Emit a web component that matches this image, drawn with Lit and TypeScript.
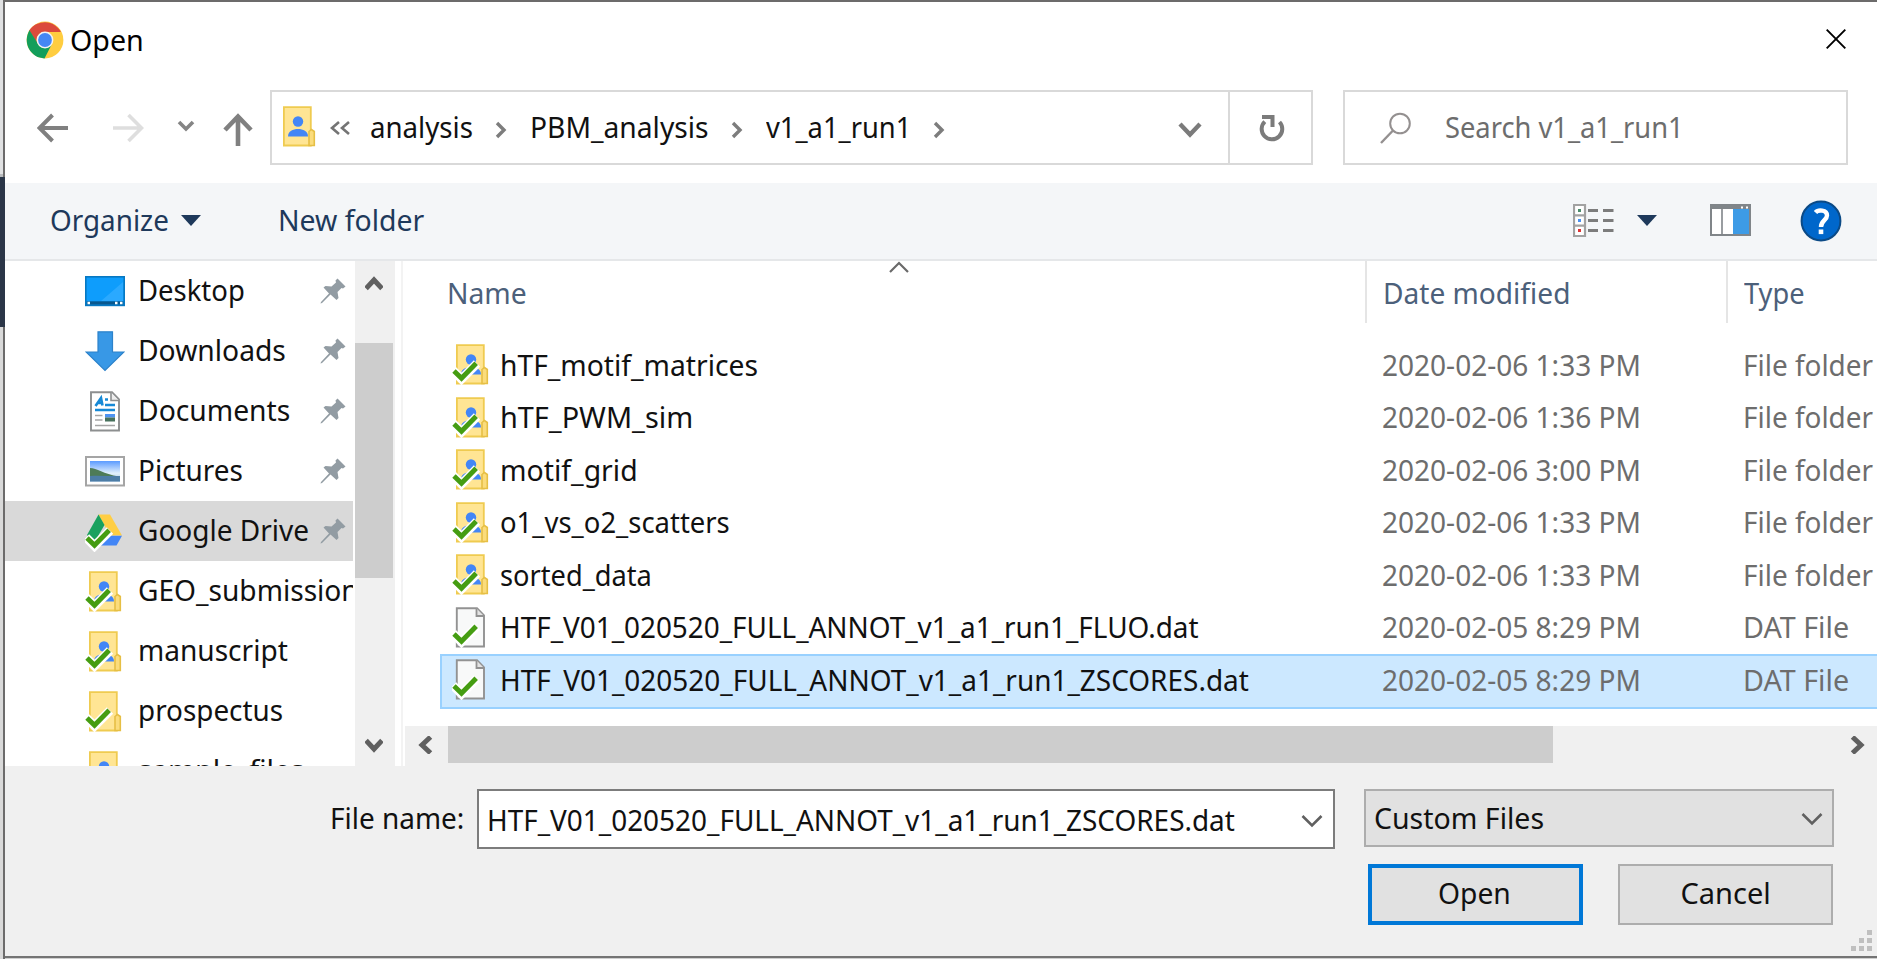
import { LitElement, html, css, svg, nothing } from "lit";
import { customElement, property } from "lit/decorators.js";

/** One line of text set to an exact advance width. */
@customElement("fit-text")
class FitText extends LitElement {
  @property() text = "";
  @property({ type: Number }) w = 0;
  static styles = css`
    :host { display: block; flex: none; white-space: pre; overflow: visible; }
    span { display: inline-block; transform-origin: 0 50%; }
  `;
  render() {
    return html`<span>${this.text}</span>`;
  }
  updated() {
    const s = this.renderRoot.querySelector("span") as HTMLElement;
    const n = s.offsetWidth;
    this.style.width = this.w + "px";
    if (n && this.w) s.style.transform = `scaleX(${this.w / n})`;
  }
}

const t = (text: string, w: number) => html`<fit-text .text=${text} .w=${w}></fit-text>`;

const check = svg`
  <path d="M1 26.500L9.500 35L25 19.500" fill="none" stroke="#fff" stroke-width="9"/>
  <path d="M2 27L9.500 34.200L24.200 19.200" fill="none" stroke="#459d12" stroke-width="4.900"/>`;
const sheet = svg`
  <path d="M4 1H32V24L35 25V40H4Z" fill="#ffe594"/>
  <path d="M4.900 1.200H31.800V39.500H4.900Z" fill="none" stroke="#efcb50" stroke-width="1.800"/>
  <path d="M30 25.500L32.500 23.500L35.300 25.500V39.500H30Z" fill="#fbdc7c" stroke="#e6bf45" stroke-width="1.600"/>`;
const person = svg`
  <circle cx="19" cy="15.500" r="5.200" fill="#4386f6"/>
  <path d="M9 30.500C9 25 14 23 19 23S29 25 29 30.500Z" fill="#4386f6"/>`;

const icons: Record<string, unknown> = {
  shared: svg`${sheet}${person}${check}`,
  plain: svg`${sheet}${check}`,
  address: svg`${sheet}${person}`,
  file: svg`
    <path d="M4.800 1.200H25L32 8.500V39.500H4.800Z" fill="#f8f9f9" stroke="#929292" stroke-width="1.900"/>
    <path d="M24.500 1.500V9H32" fill="#e3e3e3" stroke="#929292" stroke-width="1.800"/>${check}`,
  desktop: svg`
    <rect x=".8" y="5.800" width="38.400" height="28.600" fill="#0e9dfc" stroke="#0778c2" stroke-width="1.600"/>
    <path d="M16 30L38 11V30Z" fill="#2aa9ff"/>
    <rect x="1.600" y="30.300" width="36.800" height="3.300" fill="#08588f"/>
    <path d="M2.500 32H5M30 32H32.500M35 32H37.500" stroke="#fff" stroke-width="2.400"/>`,
  downloads: svg`<path d="M13 .8H27.500V21H39L20 39.500L1 21H13Z" fill="#3898e6" stroke="#2d82ca" stroke-width="1.200"/>`,
  documents: svg`
    <path d="M6 1.200H27L34 8.500V39.500H6Z" fill="#fff" stroke="#8d8f90" stroke-width="1.900"/>
    <path d="M26 1.500V9.500H34" fill="#eee" stroke="#8d8f90" stroke-width="1.600"/>
    <path d="M10.500 15L16 7L17.500 14.500M13 12H18" fill="none" stroke="#1689d6" stroke-width="2.600"/>
    <path d="M20 8.500H23M20 14H30M10 19H30" stroke="#1689d6" stroke-width="2.400"/>
    <path d="M10 24.500H17.500M10 29H17.500M10 34.500H30" stroke="#a5a5a5" stroke-width="1.700"/>
    <rect x="20" y="23" width="10" height="3.500" fill="#4e94f2"/><rect x="20" y="26.500" width="10" height="4" fill="#47715c"/>`,
  pictures: svg`
    <defs><linearGradient id="sky" x1="0" y1="0" x2="0" y2="1"><stop offset="0" stop-color="#5b9bff"/><stop offset=".6" stop-color="#e2f0fc"/><stop offset="1" stop-color="#9fc3e2"/></linearGradient></defs>
    <rect x="1" y="6" width="38" height="28.500" fill="#fff" stroke="#a5a5a5" stroke-width="2"/>
    <rect x="5" y="10" width="30" height="20.500" fill="url(#sky)"/>
    <path d="M5 17C12 17 18 23 34 25.500H5Z" fill="#4e7b57"/>
    <path d="M5 25C14 24 25 25.500 35 25V30.500H5Z" fill="#4d7da6"/>`,
  drive: svg`
    <path d="M13.500 3.500H25L37 24.500H25Z" fill="#ffce44"/>
    <path d="M13.500 3.500L19.500 14L9 32L2 24Z" fill="#1aa15f"/>
    <path d="M18 24.800H37L31.500 34.500H13Z" fill="#4386f6"/>
    ${check}`,
};

const icon = (name: string) =>
  html`<svg class="icon" width="40" height="41" viewBox="0 0 40 41">${icons[name]}</svg>`;

const pin = html`<svg class="pin" width="26" height="26" viewBox="0 0 26 26">
  <path d="M17.500 .5L25.500 8.500L23 10.500L21.500 10L17.500 14L18.500 20L16.500 22L10.500 16.500L2 25L.5 25.500L1 24L9 15.500L3.500 9.500L5.500 8L11.500 8.500L16 4.500L15.500 2.500Z" fill="#929ca3"/></svg>`;

const stroke = (w: number, h: number, d: string, color: string, sw: number) =>
  html`<svg width=${w} height=${h} viewBox="0 0 ${w} ${h}"><path d=${d} fill="none" stroke=${color} stroke-width=${sw}/></svg>`;

const places: [string, string, number, boolean][] = [
  ["desktop", "Desktop", 107, true],
  ["downloads", "Downloads", 148, true],
  ["documents", "Documents", 152, true],
  ["pictures", "Pictures", 105, true],
  ["drive", "Google Drive", 171, true],
  ["shared", "GEO_submission", 221, false],
  ["shared", "manuscript", 150, false],
  ["plain", "prospectus", 145, false],
  ["shared", "sample_files", 166, false],
];

const files: [string, string, number, string][] = [
  ["shared", "hTF_motif_matrices", 258, "2020-02-06 1:33 PM"],
  ["shared", "hTF_PWM_sim", 193, "2020-02-06 1:36 PM"],
  ["shared", "motif_grid", 138, "2020-02-06 3:00 PM"],
  ["shared", "o1_vs_o2_scatters", 230, "2020-02-06 1:33 PM"],
  ["shared", "sorted_data", 152, "2020-02-06 1:33 PM"],
  ["file", "HTF_V01_020520_FULL_ANNOT_v1_a1_run1_FLUO.dat", 699, "2020-02-05 8:29 PM"],
  ["file", "HTF_V01_020520_FULL_ANNOT_v1_a1_run1_ZSCORES.dat", 749, "2020-02-05 8:29 PM"],
];

@customElement("app-root")
class AppRoot extends LitElement {
  static styles = css`
    * { box-sizing: border-box; }
    :host {
      display: grid; grid-template-columns: 5px 1fr; width: 1877px; height: 959px; overflow: hidden;
      font: 29px/40px "Noto Sans", "Open Sans", sans-serif; color: #111;
    }
    svg { display: block; flex: none; }
    .edge { display: grid; grid-template-rows: 177px 150px 1fr; border-right: 2px solid #6c6b6b; background: #d9d9d9; }
    .edge i:nth-child(1) { background: #e0e1e2; border-bottom: 3px solid #b9bbbe; }
    .edge i:nth-child(2) { background: #2b3648; margin-right: -2px; }
    .dialog { display: grid; grid-template-rows: 88px 93px 78px 505px 190px 3px; border-top: 2px solid #6c6b6b; background: #fff; min-width: 0; }
    .title { display: flex; align-items: center; padding: 0 31px 12px 21px; color: #000; }
    .title fit-text { margin: 0 auto 0 6px; }
    .title svg:last-child { margin-bottom: 3px; }
    .nav { display: flex; align-items: flex-start; padding-left: 32px; }
    .nav > svg { margin-top: 23px; }
    .address { display: flex; align-items: center; width: 1043px; height: 75px; border: 2px solid #d9d9d9; margin-left: 17px; padding-left: 7px; flex: none; }
    .address .icon { margin-bottom: 3px; }
    .address fit-text { margin-bottom: 1px; }
    .crumb { display: flex; align-items: center; }
    .crumb svg { margin: 4px 23px 0 22px; }
    .drop { margin: 4px 0 0 auto; }
    .refresh { width: 83px; height: 71px; border-left: 2px solid #d9d9d9; margin-left: 26px; display: flex; align-items: center; justify-content: center; padding: 3px 0 0 3px; }
    .search { display: flex; align-items: center; width: 505px; height: 75px; border: 2px solid #d9d9d9; margin-left: 30px; padding-left: 34px; color: #6d6d6d; flex: none; }
    .search fit-text { margin: 0 0 1px 32px; }
    .tools { display: flex; align-items: center; background: #f4f6f8; border-bottom: 2px solid #e5e7e9; padding: 0 35px 2px 45px; color: #1e395b; }
    .tools .tri { margin: 2px 77px 0 12px; }
    .tools .tri2 { margin: 2px 53px 0 23px; }
    .tools .views { margin-left: auto; }
    .tools .help { margin: 1px 0 0 49px; }
    .body { display: grid; grid-template-columns: 348px 2px 40px 6px 1fr; min-width: 0; overflow: hidden; }
    .places { overflow: hidden; }
    .place { display: flex; align-items: center; height: 60px; padding: 0 0 0 80px; position: relative; }
    .place .icon { margin-right: 13px; }
    .place fit-text { margin-bottom: 2px; }
    .pin { position: absolute; left: 315px; top: 17px; }
    .on { background: #d9d9d9; }
    .vbar { grid-column: 3; background: #f0f0f0; display: flex; flex-direction: column; align-items: flex-start; }
    .vbar svg { margin: 14px 0 0 10px; }
    .vbar b { display: block; width: 38px; height: 235px; background: #cdcdcd; margin-top: 52px; }
    .vbar svg:last-child { margin: 160px 0 0 10px; }
    .list { grid-column: 5; display: grid; grid-template-rows: 79px 386px 40px; border-left: 2px solid #f3f3f3; min-width: 0; }
    .head { display: grid; grid-template-columns: 964px 361px 1fr; height: 62px; color: #4c607a; position: relative; }
    .head > div { display: flex; align-items: center; border-right: 2px solid #e5e5e5; padding: 1px 0 0 16px; }
    .head > div:first-child { padding-left: 44px; }
    .head > .end { border: 0; }
    .sort { position: absolute; left: 486px; top: 0; }
    .row { display: grid; grid-template-columns: 942px 361px 1fr; height: 52.5px; margin-left: 37px; align-items: center; color: #6d6d6d; }
    .row .icon { margin: 0 8px 3px 0; }
    .name { display: flex; align-items: center; padding-left: 12px; color: #111; }
    .row fit-text { margin-bottom: 3px; }
    .sel { background: #cce8ff; box-shadow: inset 0 0 0 2px #99d1ff; height: 55px; margin-top: -1.5px; margin-right: -4px; }
    .hbar { display: flex; background: #f0f0f0; margin-left: 2px; padding-left: 12px; align-items: flex-start; }
    .hbar svg { margin-top: 10px; }
    .hbar b { width: 1105px; height: 37px; background: #cdcdcd; margin: 0 297px 0 15px; flex: none; }
    .foot { background: #f0f0f0; display: grid; grid-template-rows: 60px 60px; row-gap: 15px; padding-top: 23px; position: relative; }
    .fields, .buttons { display: flex; align-items: flex-start; }
    .fields { padding-left: 325px; }
    .fields > fit-text { margin: 9px 13px 0 0; }
    .input { display: flex; align-items: center; width: 858px; height: 60px; border: 2px solid #7c7c7c; background: #fff; padding: 1px 10px 0 8px; flex: none; }
    .input svg { margin: 3px 0 0 auto; }
    .select { display: flex; align-items: center; justify-content: space-between; width: 470px; height: 58px; border: 2px solid #adadad; background: #e1e1e1; margin-left: 29px; padding: 0 9px 0 8px; flex: none; }
    .select fit-text { margin-bottom: 1px; }
    .select svg { margin-top: 2px; }
    .buttons { padding-left: 1363px; gap: 35px; }
    .btn { width: 215px; height: 61px; border: 2px solid #adadad; background: #e1e1e1; display: flex; align-items: center; justify-content: center; padding-bottom: 3px; }
    .main { border: 4px solid #0078d7; padding-right: 2px; }
    .grip { position: absolute; right: 5px; bottom: 5px; }
    .under { border-top: 2px solid #747474; background: #cfcfcf; }
  `;

  render() {
    const crumbs: [string, number][] = [["analysis", 103], ["PBM_analysis", 179], ["v1_a1_run1", 145]];
    const tri = (c: string) => html`<svg class=${c} width="20" height="12" viewBox="0 0 20 12"><path d="M0 0H20L10 11Z" fill="#1e395b"/></svg>`;
    return html`
      <div class="edge"><i></i><i></i></div>
      <div class="dialog">
        <div class="title">
          <svg width="38" height="38" viewBox="0 0 38 38">
            <circle cx="19" cy="19" r="18.400" fill="#ffcd40"/>
            <path d="M3.100 9.800A18.400 18.400 0 0 1 34.900 11H19A8 8 0 0 0 11.400 22.500Z" fill="#db4a3c"/>
            <path d="M3.500 9.300A18.400 18.400 0 0 0 18.500 37.400L25.800 23.200A8 8 0 0 1 12.100 23Z" fill="#139e5b"/>
            <circle cx="19" cy="19" r="8.400" fill="#f3f3f3"/><circle cx="19" cy="19" r="6.900" fill="#4587f4"/>
          </svg>
          ${t("Open", 74)}
          ${stroke(20, 20, "M.7 .7L19.3 19.3M19.3 .7L.7 19.3", "#000", 1.9)}
        </div>
        <div class="nav">
          ${stroke(32, 30, "M31 15H2M15.5 2L2.5 15L15.5 28", "#808080", 4)}
          <span style="width:43px"></span>
          ${stroke(32, 30, "M1 15H30M16.5 2L29.5 15L16.5 28", "#dedede", 3.6)}
          <span style="width:33px"></span>
          ${stroke(18, 30, "M2 9L9 16L16 9", "#858585", 3.6)}
          <span style="width:28px"></span>
          ${stroke(30, 34, "M15 33V4M2 17L15 3.5L28 17", "#808080", 4.6)}
          <div class="address">
            ${icon("address")}
            <span style="width:10px"></span>
            ${stroke(22, 16, "M10 2L3 8L10 14M20 2L13 8L20 14", "#747474", 2.6)}
            <span style="width:19px"></span>
            ${crumbs.map(([c, w]) => html`<div class="crumb">${t(c, w)}${stroke(12, 18, "M2 2L9 9L2 16", "#7d7d7d", 3.4)}</div>`)}
            <svg class="drop" width="24" height="16" viewBox="0 0 24 16"><path d="M2 2L12 12.500L22 2" fill="none" stroke="#7b7b7b" stroke-width="4.400"/></svg>
            <div class="refresh">
              <svg width="28" height="32" viewBox="0 0 28 32"><path d="M21.500 9A10.300 10.300 0 1 1 6.800 8.600" fill="none" stroke="#7b7b7b" stroke-width="4"/><path d="M4 4H14.500V14" fill="none" stroke="#7b7b7b" stroke-width="4"/></svg>
            </div>
          </div>
          <div class="search">
            <svg width="34" height="34" viewBox="0 0 34 34"><circle cx="21" cy="12.500" r="9.800" fill="none" stroke="#949090" stroke-width="2"/><path d="M14 19.500L2 32" stroke="#949090" stroke-width="2.400"/></svg>
            ${t("Search v1_a1_run1", 239)}
          </div>
        </div>
        <div class="tools">
          ${t("Organize", 119)} ${tri("tri")} ${t("New folder", 146)}
          <svg class="views" width="41" height="33" viewBox="0 0 41 33">
            <path d="M1 1H12V32H1ZM1 11.300H12M1 21.600H12" fill="#fff" stroke="#a2a2a2" stroke-width="2.200"/>
            <rect x="5" y="5" width="3" height="3" fill="#4b8b6b"/><rect x="5" y="15" width="3" height="3" fill="#4a90f0"/><rect x="5" y="25" width="3" height="3" fill="#d33"/>
            <path d="M15 6.500H25M30 6.500H40.500M15 16.500H25M30 16.500H40.500M15 26.500H25M30 26.500H40.500" stroke="#7c7c7c" stroke-width="2.800"/>
          </svg>
          ${tri("tri2")}
          <svg width="41" height="32" viewBox="0 0 41 32">
            <rect x="1" y="1" width="39" height="30" fill="#fff" stroke="#808589" stroke-width="2"/>
            <rect width="41" height="5" fill="#808589"/><rect x="23" y="5" width="16" height="25" fill="#3d9be6"/>
            <path d="M12 5V31" stroke="#808589" stroke-width="1.600"/><path d="M31 3.500H33M36 3.500H38" stroke="#fff" stroke-width="2"/>
          </svg>
          <svg class="help" width="42" height="42" viewBox="0 0 42 42">
            <circle cx="21" cy="21" r="19.400" fill="#0067cb" stroke="#0b4a86" stroke-width="2"/>
            <path d="M15.500 12.500C18 9.500 27 9.500 27 15.500C27 20 21 20.500 21 27" fill="none" stroke="#fff" stroke-width="4.400"/><rect x="18.700" y="29.500" width="4.600" height="4.600" fill="#fff"/>
          </svg>
        </div>
        <div class="body">
          <div class="places">
            ${places.map(([i, n, w, p]) => html`<div class="place ${i === "drive" ? "on" : ""}">${icon(i)}${t(n, w)}${p ? pin : nothing}</div>`)}
          </div>
          <div class="vbar">
            ${stroke(18, 16, "M1 13.500L9 5L17 13.500", "#606060", 5)}<b></b>${stroke(18, 16, "M1 2.500L9 11L17 2.500", "#606060", 5)}
          </div>
          <div class="list">
            <div class="head">
              <div>${t("Name", 80)}</div><div>${t("Date modified", 187)}</div><div class="end">${t("Type", 61)}</div>
              <svg class="sort" width="20" height="13" viewBox="0 0 20 13"><path d="M1 11L10 2L19 11" fill="none" stroke="#6a6a6a" stroke-width="2.200"/></svg>
            </div>
            <div class="rows">
              ${files.map(([i, n, w, d], k) => html`<div class="row ${k === 6 ? "sel" : ""}">
                <div class="name">${icon(i)}${t(n, w)}</div>${t(d, 259)}${i === "file" ? t("DAT File", 106) : t("File folder", 130)}
              </div>`)}
            </div>
            <div class="hbar">
              ${stroke(16, 18, "M13.500 1L5 9L13.500 17", "#606060", 5)}<b></b>${stroke(16, 18, "M2.500 1L11 9L2.500 17", "#606060", 5)}
            </div>
          </div>
        </div>
        <div class="foot">
          <div class="fields">
            ${t("File name:", 134)}
            <div class="input">${t("HTF_V01_020520_FULL_ANNOT_v1_a1_run1_ZSCORES.dat", 748)}${stroke(22, 14, "M1.500 2L11 11.500L20.500 2", "#606060", 2.6)}</div>
            <div class="select">${t("Custom Files", 170)}${stroke(22, 14, "M1.500 2L11 11.500L20.500 2", "#606060", 2.6)}</div>
          </div>
          <div class="buttons"><div class="btn main">${t("Open", 73)}</div><div class="btn">${t("Cancel", 90)}</div></div>
          <svg class="grip" width="21" height="21" viewBox="0 0 21 21"><path d="M16 0h5v5h-5zM8 8h5v5h-5zM16 8h5v5h-5zM0 16h5v5h-5zM8 16h5v5h-5zM16 16h5v5h-5z" fill="#bfbfbf"/></svg>
        </div>
        <div class="under"></div>
      </div>`;
  }
}
